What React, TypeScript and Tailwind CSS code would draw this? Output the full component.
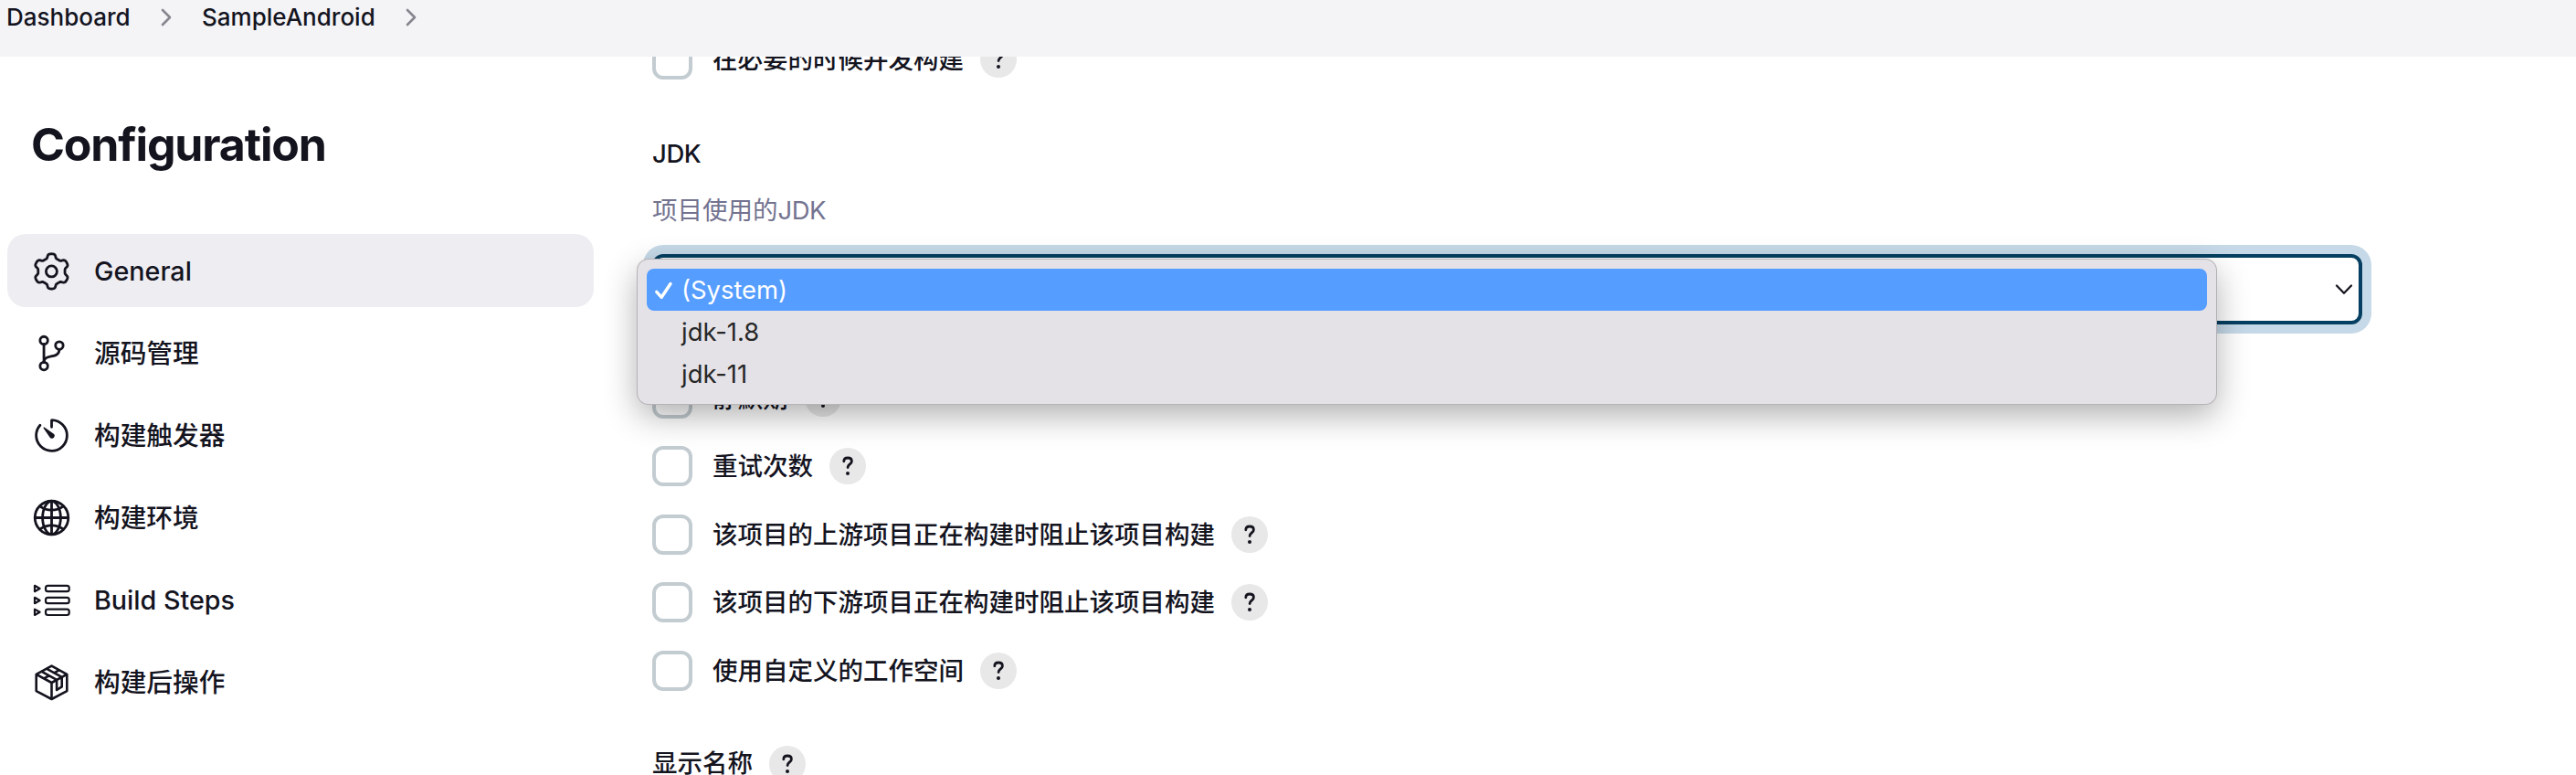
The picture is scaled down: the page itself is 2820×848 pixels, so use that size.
import React from "react";
import { IoGitBranchOutline, IoTimerOutline, IoGlobeOutline } from "react-icons/io5";

const gearPath =
  Array.from({ length: 144 }, (_, i) => {
    const a = (i * Math.PI) / 72;
    const r = 16.9 + 2.3 * Math.tanh(2.2 * Math.cos(6 * a));
    return `${i ? "L" : "M"}${(22.4 + r * Math.sin(a)).toFixed(2)} ${(22.9 - r * Math.cos(a)).toFixed(2)}`;
  }).join("") + "Z";

function GearIcon() {
  return (
    <svg viewBox="0 0 45 45" className="size-[45px]" fill="none" stroke="currentColor" strokeWidth="2.8" strokeLinejoin="round">
      <path d={gearPath} />
      <circle cx="22.4" cy="22.9" r="6" />
    </svg>
  );
}

function StepsIcon() {
  return (
    <svg viewBox="0 0 45 45" className="size-[45px]" fill="none" stroke="currentColor" strokeWidth="2.2" strokeLinejoin="round">
      {[10, 23, 35.8].map((y) => (
        <g key={y}>
          <path d={`M4 ${y - 3.2}v6.4l5.6-3.2z`} />
          <rect x="16" y={y - 3.2} width="25.7" height="6.4" rx="2.4" />
        </g>
      ))}
    </svg>
  );
}

function PackageIcon() {
  return (
    <svg viewBox="0 0 45 45" className="size-[45px]" fill="none" stroke="currentColor" strokeWidth="2.6" strokeLinejoin="round">
      <path d="M22.5 4.6 39.3 13.8v18.300L22.500 41 5.700 32.100V13.800z" />
      <path d="M5.700 13.800 22.500 23v18M22.500 23l16.800-9.200M16.900 7.700l16.800 9.200M11.300 10.700l16.800 9.200M33.700 16.900v10.500L28.100 31V19.900M14.100 18.400l5.600-3.100M30.900 9.200l-5.600 3.100" />
    </svg>
  );
}

const nav = [
  { label: "General", icon: <GearIcon />, active: true },
  { label: "源码管理", icon: <IoGitBranchOutline size={45} /> },
  { label: "构建触发器", icon: <IoTimerOutline size={45} /> },
  { label: "构建环境", icon: <IoGlobeOutline size={45} /> },
  { label: "Build Steps", icon: <StepsIcon /> },
  { label: "构建后操作", icon: <PackageIcon /> },
];

function Crumb({ text, cls }: { text: string; cls: string }) {
  return (
    <>
      <span className={cls}>{text}</span>
      <svg viewBox="0 0 12 20" className="h-5 w-3 shrink-0" fill="none" stroke="#86868f" strokeWidth="2.600" strokeLinecap="round" strokeLinejoin="round">
        <path d="M2 2l8 8-8 8" />
      </svg>
    </>
  );
}

function Help() {
  return (
    <span className="ml-[18px] flex size-10 shrink-0 items-center justify-center rounded-full bg-[#e8e8e8] text-[#14141f]">
      <svg viewBox="0 0 40 40" className="size-10" fill="none" stroke="currentColor" strokeWidth="2.800" strokeLinecap="round" strokeLinejoin="round">
        <path d="M15.800 14.800c0-2.600 1.900-3.800 4.300-3.800 2.500 0 4.300 1.400 4.300 3.700 0 3.200-4.300 3.300-4.300 6.900" />
        <circle cx="20" cy="27.900" r="2" fill="currentColor" stroke="none" />
      </svg>
    </span>
  );
}

function Check({ label }: { label: string }) {
  return (
    <div className="flex h-11 items-center">
      <span className="size-11 shrink-0 rounded-xl border-4 border-[#c3ccd1] bg-white" />
      <span className="ml-[22px] text-[27.5px] leading-10 font-medium">{label}</span>
      <Help />
    </div>
  );
}

export default function App() {
  return (
    <div className="flex h-[848px] w-[2820px] flex-col overflow-hidden bg-white font-[Inter,'Noto_Sans_CJK_SC',sans-serif] text-[#14141f]">
      <header className="flex h-[62px] shrink-0 items-start bg-[#f4f4f7] pt-[9px] pl-[7px]">
        <div className="flex h-5 items-center text-[26px] leading-5 font-medium">
          <Crumb text="Dashboard" cls="w-[169px]" />
          <Crumb text="SampleAndroid" cls="ml-[33px] w-[223px]" />
        </div>
      </header>
      <div className="flex min-h-0 flex-1">
        <aside className="w-[650px] shrink-0 pl-2">
          <h1 className="mt-[66px] ml-[26px] h-[60px] text-[50px] leading-[60px] font-bold tracking-[-1.15px]">Configuration</h1>
          <nav className="mt-[68px] flex flex-col gap-[10px] text-[28.700px] font-medium">
            {nav.map((n) => (
              <div key={n.label} className={n.active ? "flex h-20 items-center rounded-[20px] bg-[#eeedf2] pl-[26px]" : "flex h-20 items-center pl-[26px]"}>
                {n.icon}
                <span className="ml-6 pt-0.5 leading-10">{n.label}</span>
              </div>
            ))}
          </nav>
        </aside>
        <main className="flex min-w-0 flex-1 flex-col overflow-hidden pl-16">
          <div className="mt-[-19px] shrink-0">
            <Check label="在必要的时候并发构建" />
          </div>
          <div className="mt-[61px] h-10 shrink-0 text-[27.500px] leading-10 font-medium tracking-[-0.4px]">JDK</div>
          <div className="mt-[22px] h-10 shrink-0 text-[27.500px] leading-10 text-[#737390]">项目使用的<span className="tracking-[-0.5px]">JDK</span></div>
          <div className="relative mt-[28px] flex h-[77px] w-[1872px] shrink-0 items-center justify-end rounded-xl border-4 border-[#053f61] bg-white pr-[6px] shadow-[0_0_0_10px_#c6d9e8]">
            <svg viewBox="0 0 20 12" className="h-3 w-5" fill="none" stroke="#14141f" strokeWidth="2.200" strokeLinecap="round" strokeLinejoin="round">
              <path d="M2 1.500l8 8.300 8-8.300" />
            </svg>
            <div className="absolute top-[2px] left-[-20px] z-10 flex h-[158px] w-[1728px] flex-col rounded-xl bg-[#e4e2e7] p-[10px] text-[27.400px] text-[#262626] shadow-[0_0_0_1px_#b5b3b6,0_12px_36px_rgba(0,0,0,0.32)]">
              <div className="flex h-[46px] items-center rounded-lg bg-[#559dff] pt-0.5 pl-2 text-white">
                <svg viewBox="0 0 22 22" className="size-[22px]" fill="none" stroke="white" strokeWidth="3.400" strokeLinecap="round" strokeLinejoin="round">
                  <path d="M2.800 12.300l5.400 6L18 3.500" />
                </svg>
                <span className="ml-[8px]">(System)</span>
              </div>
              <div className="flex h-[46px] items-center pt-0.5 pl-[38px]">jdk-1.8</div>
              <div className="flex h-[46px] items-center pt-0.5 pl-[38px]">jdk-11</div>
            </div>
          </div>
          <div className="mt-[59px] flex shrink-0 flex-col gap-[30.400px]">
            <Check label="静默期" />
            <Check label="重试次数" />
            <Check label="该项目的上游项目正在构建时阻止该项目构建" />
            <Check label="该项目的下游项目正在构建时阻止该项目构建" />
            <Check label="使用自定义的工作空间" />
          </div>
          <div className="mt-[60px] flex h-10 shrink-0 items-center text-[27.500px] font-medium">
            <span>显示名称</span>
            <Help />
          </div>
        </main>
      </div>
    </div>
  );
}
